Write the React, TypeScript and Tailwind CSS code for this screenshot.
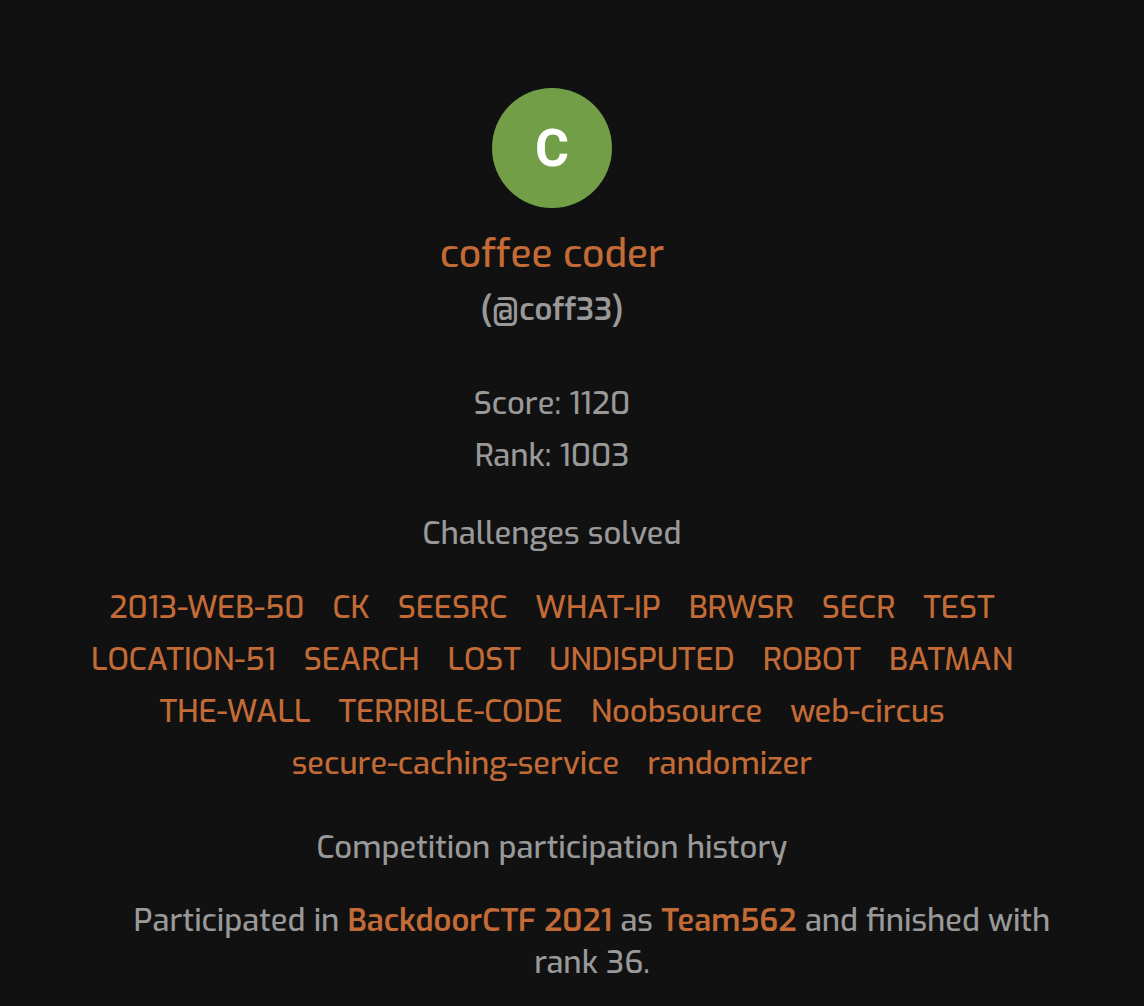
import React from "react";

const challenges: string[] = [
  "2013-WEB-50", "CK", "SEESRC", "WHAT-IP", "BRWSR", "SECR", "TEST",
  "LOCATION-51", "SEARCH", "LOST", "UNDISPUTED", "ROBOT", "BATMAN",
  "THE-WALL", "TERRIBLE-CODE", "Noobsource", "web-circus",
  "secure-caching-service", "randomizer",
];

export default function App() {
  return (
    <div className="min-h-screen bg-[#111111] pr-10 text-center font-[Exo,'Exo_2',Roboto,sans-serif] text-[31px] leading-[52px] font-medium text-[#999999]">
      <main className="flex flex-col items-center pt-22">
        <div className="flex size-30 items-center justify-center rounded-full bg-[#739e48] pt-0.5 font-['Roboto',sans-serif] text-[52px] font-bold text-white">
          C
        </div>
        <h1 className="mt-5 text-[39px] text-[#c36b37] [font-variant-ligatures:none]">coffee coder</h1>
        <h2 className="mt-1 font-semibold [font-variant-ligatures:none]">(@coff33)</h2>
        <p className="mt-[42px]">Score: 1120</p>
        <p>Rank: 1003</p>
        <h3 className="mt-[26px]">Challenges solved</h3>
        <ul className="mt-[22px] flex flex-wrap justify-center gap-x-7 px-20">
          {challenges.map((name) => (
            <li key={name}>
              <a href="#" className="text-[#c36b37]">
                {name}
              </a>
            </li>
          ))}
        </ul>
        <h3 className="mt-8">Competition participation history</h3>
        <p className="mt-[26px] pr-10 pl-30 leading-[42px]">
          Participated in <a href="#" className="font-semibold text-[#c36b37]">BackdoorCTF 2021</a> as{" "}
          <a href="#" className="font-semibold text-[#c36b37]">Team562</a> and finished with rank 36.
        </p>
      </main>
    </div>
  );
}
